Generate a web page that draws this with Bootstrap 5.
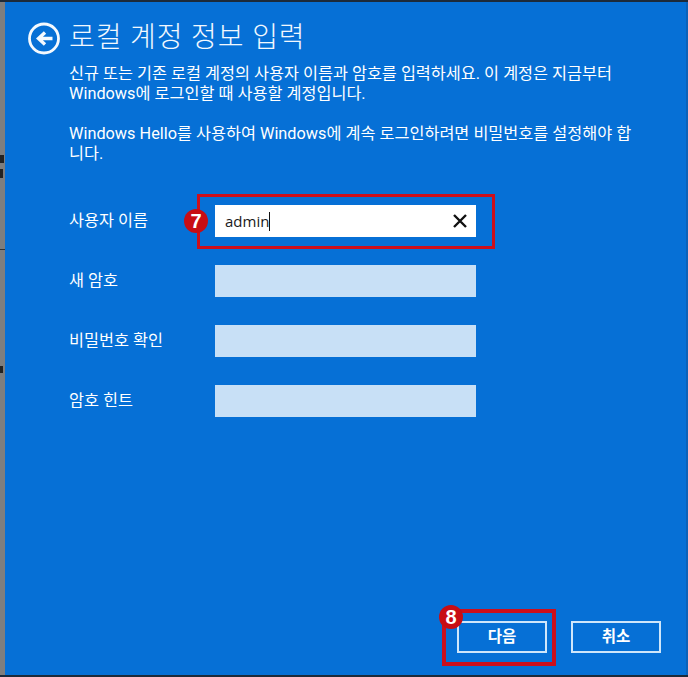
<!DOCTYPE html>
<html lang="ko"><head><meta charset="utf-8">
<link href="https://cdn.jsdelivr.net/npm/bootstrap@5.3.0/dist/css/bootstrap.min.css" rel="stylesheet">
<style>
html,body{margin:0;height:677px;overflow:hidden;background:#7c7c7c}
body{font-family:Roboto,"Noto Sans CJK KR",sans-serif;color:#fff;font-size:16.3px}
.shot{width:688px;height:677px;border-top:2px solid #1c2a3a;border-bottom:2px solid #1c2a3a}
.strip{width:5px;background:#7e7e7e;flex:none;position:relative}
.strip i{position:absolute;left:0;background:#222}
.strip .m1{top:153px;width:4px;height:8px}
.strip .m2{top:167px;width:3px;height:9px}
.strip .m3{top:247px;width:5px;height:1px;background:#333}
.strip .m4{top:364px;width:3px;height:7px}
.pane{background:#0670d6;flex:1;padding:18px 0 0 24px;border-right:2px solid #0b62b8;position:relative}
.backicon{width:32px;height:32px;flex:none;overflow:visible}
.head{gap:8px;height:36px}
.ttl{font-size:28px;line-height:36px;letter-spacing:.9px;margin:0;font-weight:300;color:#f2f8fe}
.para{margin:0 0 20px 40px;line-height:20px;width:575px}
.intro{margin-top:8px}
.lastpara{margin-bottom:41px}
.frow{margin:0 0 28px 40px;height:32px}
.flabel{width:146px;flex:none}
.fbox{width:261px;height:32px;background:#c8e0f6;flex:none;position:relative}
.fbox.on{background:#fff;color:#1a1a1a;padding-left:10px;line-height:32px;font-size:15px;font-family:"Open Sans",sans-serif}
.caret{display:inline-block;width:1px;height:19px;background:#111;vertical-align:-4px}
.xicon{position:absolute;right:9px;top:9px;width:14px;height:14px}
.redbox{position:absolute;border:3px solid #cc0f1c;pointer-events:none}
.fbox .redbox{left:-18px;top:-11px;width:298px;height:55px}
.pin{position:absolute;width:24px;height:24px;border-radius:50%;background:#c80d14;color:#fff;font-weight:700;font-size:20px;line-height:24px;text-align:center;font-family:"Liberation Sans",sans-serif}
.fbox .pin{left:-31px;top:4px}
.footbar{position:absolute;right:25px;bottom:22px;gap:24px}
.btnwrap{position:relative}
.wbtn{width:90px;height:32px;border:2px solid #cfe6fa;border-radius:0;background:transparent;color:#fff;font-size:15.5px;font-weight:700;line-height:28px;padding:0;display:block}
.btnwrap .redbox{left:-15px;top:-12px;width:114px;height:57px;border-width:4px}
.btnwrap .pin{left:-18px;top:-16px}
.btnrow .wbtn:hover{color:#fff}
</style></head>
<body>
<div class="shot d-flex">
<div class="strip"><i class="m1"></i><i class="m2"></i><i class="m3"></i><i class="m4"></i></div>
<div class="pane">
  <div class="head d-flex align-items-center">
    <svg class="backicon" viewBox="0 0 32 32"><circle cx="15" cy="16.5" r="14.5" fill="none" stroke="#f4f9fe" stroke-width="2.8"/><path d="M23.5 16.5H10M16 10.5l-6.5 6 6.5 6" fill="none" stroke="#f4f9fe" stroke-width="3.4"/></svg>
    <h1 class="ttl">로컬 계정 정보 입력</h1>
  </div>
  <p class="para intro">신규 또는 기존 로컬 계정의 사용자 이름과 암호를 입력하세요. 이 계정은 지금부터<br>Windows에 로그인할 때 사용할 계정입니다.</p>
  <p class="para lastpara">Windows Hello를 사용하여 Windows에 계속 로그인하려면 비밀번호를 설정해야 합<br>니다.</p>
  <div class="frow d-flex align-items-center"><div class="flabel">사용자 이름</div>
    <div class="fbox on">admin<span class="caret"></span>
      <svg class="xicon" viewBox="0 0 14 14"><path d="M1 1l12 12M13 1L1 13" stroke="#111" stroke-width="2.4" fill="none"/></svg>
      <span class="redbox"></span><span class="pin">7</span></div></div>
  <div class="frow d-flex align-items-center"><div class="flabel">새 암호</div><div class="fbox"></div></div>
  <div class="frow d-flex align-items-center"><div class="flabel">비밀번호 확인</div><div class="fbox"></div></div>
  <div class="frow d-flex align-items-center"><div class="flabel">암호 힌트</div><div class="fbox"></div></div>
  <div class="footbar btnrow d-flex">
    <div class="btnwrap"><button class="btn wbtn" type="button">다음</button><span class="redbox"></span><span class="pin">8</span></div>
    <div class="btnwrap"><button class="btn wbtn" type="button">취소</button></div>
  </div>
</div>
</div>
<script src="https://cdn.jsdelivr.net/npm/bootstrap@5.3.0/dist/js/bootstrap.bundle.min.js"></script>
</body></html>
